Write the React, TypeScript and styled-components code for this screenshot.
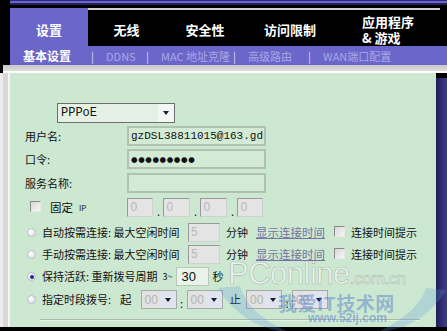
import React from 'react';
import styled, { createGlobalStyle } from 'styled-components';

const colors = {
    purple: '#6b66c9',
    purpleDark: '#2d2a78',
    green: '#cde8d1',
    inputBorder: '#b2c2b2',
    link: '#7474a2',
    navy: '#2b2a6e',
};

const cjk = `"Noto Sans CJK SC", "Noto Sans", sans-serif`;

const GlobalStyle = createGlobalStyle`
    html, body {
        margin: 0;
        padding: 0;
        background: #000;
    }
`;

const Frame = styled.div`
    width: 447px;
    height: 331px;
    overflow: hidden;
    position: relative;
    display: flex;
    flex-direction: column;
    background: #000;
    font-family: ${cjk};
`;

const TopStrip = styled.div`
    height: 8px;
    margin-left: 10px;
    box-sizing: border-box;
    border-top: 1px solid ${colors.purpleDark};
    border-bottom: 3px solid #000;
    background: ${colors.purple};
    box-shadow: inset 0 -2px 0 #23225a;
`;

const TabBar = styled.div`
    height: 38px;
    margin-left: 10px;
    display: flex;
`;

const Tab = styled.div<{ $w: number; $active?: boolean; $left?: number }>`
    width: ${p => p.$w}px;
    box-sizing: border-box;
    display: flex;
    align-items: center;
    justify-content: ${p => (p.$left ? 'flex-start' : 'center')};
    padding-left: ${p => p.$left ?? 0}px;
    color: #fff;
    font-weight: 700;
    font-size: 13px;
    line-height: 16px;
    background: ${p => (p.$active ? colors.purple : '#000')};
    border-top: ${p => (p.$active ? 'none' : '2px solid #cfcfd4')};
    padding-top: ${p => (p.$active ? 5 : 3)}px;
`;

const SubNav = styled.div`
    height: 19px;
    background: ${colors.purple};
    margin-left: 10px;
    display: flex;
    align-items: center;
    padding-left: 13px;
    font-size: 11px;
    color: #a9a6e6;
`;

const SubItem = styled.span<{ $active?: boolean; $w: number }>`
    width: ${p => p.$w}px;
    color: ${p => (p.$active ? '#fff' : '#a9a6e6')};
    font-size: ${p => (p.$active ? 12 : 11)}px;
    font-weight: ${p => (p.$active ? 700 : 400)};
    white-space: nowrap;
`;

const Pipe = styled.span`
    width: 15px;
    color: #dcdaf7;
    font-size: 11px;
`;

const Shade = styled.div`
    height: 8px;
    margin-left: 3px;
    box-sizing: border-box;
    background: linear-gradient(#c6c6c6, #dedede);
    border-bottom: 2px solid #fff;
`;

const Body = styled.div`
    flex: 1;
    display: flex;
    min-height: 0;
`;

const LeftRail = styled.div`
    width: 10px;
    box-sizing: border-box;
    background: #d8d8d8;
    border-left: 3px solid #ececec;
    border-right: 2px solid #f4f4f4;
`;

const RightRail = styled.div`
    width: 11px;
    margin-top: 5px;
    background: linear-gradient(90deg, #1e1d52, ${colors.navy} 40%, #3d3c8c);
`;

const Panel = styled.div`
    flex: 1;
    background: ${colors.green};
    padding: 30px 0 0 15px;
    display: flex;
    flex-direction: column;
    position: relative;
`;

const Row = styled.div<{ $h: number; $indent?: number }>`
    height: ${p => p.$h}px;
    display: flex;
    align-items: flex-start;
    padding-left: ${p => p.$indent ?? 0}px;
    font-size: 11px;
    color: #111;
    white-space: nowrap;
`;

const Label = styled.span`
    width: 102px;
    line-height: 20px;
`;

const Text = styled.span<{ $ml?: number; $size?: number; $w?: number }>`
    margin-left: ${p => p.$ml ?? 0}px;
    font-size: ${p => p.$size ?? 11}px;
    line-height: 19px;
    ${p => (p.$w ? `width: ${p.$w}px;` : '')}
`;

const SelectBox = styled.div<{ $w: number }>`
    width: ${p => p.$w}px;
    height: 20px;
    box-sizing: border-box;
    border: 1px solid #6e6e6e;
    background: #e6f1e5;
    display: flex;
    align-items: center;
    font-family: "Liberation Mono", monospace;
    font-size: 12px;
    padding-left: 3px;
    margin-left: 32px;
`;

const SelectText = styled.span`
    flex: 1;
`;

const ArrowBtn = styled.span<{ $tone?: string }>`
    width: 16px;
    height: 100%;
    background: ${p => p.$tone ?? '#f4f6f4'};
    display: flex;
    align-items: center;
    justify-content: center;
    &::after {
        content: '';
        border-left: 3.5px solid transparent;
        border-right: 3.5px solid transparent;
        border-top: 4px solid #1a1a3a;
    }
`;

const TextInput = styled.div<{ $w: number }>`
    width: ${p => p.$w}px;
    height: 20px;
    box-sizing: border-box;
    border: 2px solid ${colors.inputBorder};
    background: #d3ebd5;
    font-family: "Liberation Mono", monospace;
    font-size: 11px;
    line-height: 16px;
    padding-left: 2px;
    color: #111;
    overflow: hidden;
`;

const Dots = styled.span`
    font-family: "DejaVu Sans", sans-serif;
    font-size: 7.5px;
    letter-spacing: 0.6px;
    font-weight: 700;
`;

const NumInput = styled.div<{ $w: number; $ml?: number }>`
    width: ${p => p.$w}px;
    height: 19px;
    box-sizing: border-box;
    margin-left: ${p => p.$ml ?? 0}px;
    border: 1px solid #9a9a9a;
    border-right-color: #d0d0d0;
    border-bottom-color: #d0d0d0;
    background: #e4e4e4;
    color: #b8b8b8;
    font-family: "Liberation Sans", sans-serif;
    font-size: 12px;
    line-height: 17px;
    padding-left: 2px;
`;

const ActiveNum = styled(NumInput)`
    background: #eaf3ea;
    border: 1px solid #b8c6b8;
    color: #111;
    font-size: 13px;
    padding-left: 5px;
`;

const Dot = styled.span`
    width: 10px;
    text-align: center;
    line-height: 26px;
    font-size: 11px;
`;

const CheckBox = styled.span<{ $ml?: number }>`
    width: 11px;
    height: 11px;
    margin-left: ${p => p.$ml ?? 0}px;
    margin-top: 3px;
    box-sizing: border-box;
    border: 1px solid #8a8a8a;
    border-right-color: #e8e8e8;
    border-bottom-color: #e8e8e8;
    background: linear-gradient(135deg, #d8d8d8, #f6f6f6);
`;

const Radio = styled.span<{ $on?: boolean }>`
    width: 9px;
    height: 9px;
    margin-top: 5px;
    margin-right: 6px;
    border-radius: 50%;
    box-sizing: border-box;
    border: 1px solid #b8c0c8;
    background: radial-gradient(circle at 35% 35%, #fff, #d6dbe0);
    display: flex;
    align-items: center;
    justify-content: center;
    &::after {
        content: '';
        display: ${p => (p.$on ? 'block' : 'none')};
        width: 4px;
        height: 4px;
        border-radius: 50%;
        background: #262a7a;
    }
`;

const LinkText = styled.span<{ $ml?: number }>`
    margin-left: ${p => p.$ml ?? 0}px;
    color: ${colors.link};
    text-decoration: underline;
    line-height: 19px;
    font-size: 11.5px;
`;

const SmallSelect = styled.div<{ $ml?: number }>`
    width: 36px;
    height: 19px;
    margin-left: ${p => p.$ml ?? 0}px;
    box-sizing: border-box;
    border: 1px solid #a8a8a8;
    background: #e2e2e2;
    display: flex;
    align-items: center;
    color: #b4b4b4;
    font-family: "Liberation Sans", sans-serif;
    font-size: 12px;
    padding-left: 3px;
`;

const Divider = styled.div`
    margin: 6px 16px 0 15px;
    height: 1px;
    background: #aeb9ae;
    border-bottom: 1px solid #e6f2e6;
`;

const Bottom = styled.div`
    height: 4px;
    background: #000;
`;

const Watermark = styled.div`
    position: absolute;
    left: 218px;
    top: 185px;
    width: 200px;
    height: 72px;
    pointer-events: none;
    display: flex;
    flex-direction: column;
    align-items: flex-start;
`;

const WmBrand = styled.div`
    font-family: "Liberation Sans", sans-serif;
    color: rgba(255, 255, 255, 0.55);
    -webkit-text-stroke: 0.6px rgba(120, 130, 130, 0.5);
    font-size: 31px;
    line-height: 32px;
    letter-spacing: -0.5px;
    span {
        font-size: 17px;
    }
`;

const WmSite = styled.div`
    margin: -4px 0 0 50px;
    font-family: ${cjk};
    font-weight: 700;
    font-size: 19px;
    line-height: 24px;
    color: rgba(60, 110, 200, 0.42);
    letter-spacing: 0.5px;
`;

const WmUrl = styled.div`
    margin: -3px 0 0 80px;
    font-family: "Liberation Sans", sans-serif;
    font-weight: 700;
    font-size: 12px;
    line-height: 12px;
    color: rgba(60, 110, 200, 0.45);
`;

const Wings = styled.svg`
    position: absolute;
    left: -10px;
    top: 10px;
`;

const tabs = [
    { label: '设置', w: 78, active: true },
    { label: '无线', w: 77 },
    { label: '安全性', w: 80 },
    { label: '访问限制', w: 90 },
    { label: '应用程序\n& 游戏', w: 105, left: 27 },
];

const subs = [
    { label: '基本设置', w: 68, active: true },
    { label: 'DDNS', w: 40 },
    { label: 'MAC 地址克隆', w: 72 },
    { label: '高级路由', w: 60 },
    { label: 'WAN端口配置', w: 80 },
];

function IdleRow({ label }: { label: string }) {
    return (
        <Row $h={22} $indent={2}>
            <Radio />
            <Text $w={146}>{label}</Text>
            <NumInput $w={32}>5</NumInput>
            <Text $ml={6}>分钟</Text>
            <LinkText $ml={8}>显示连接时间</LinkText>
            <CheckBox $ml={9} />
            <Text $ml={6}>连接时间提示</Text>
        </Row>
    );
}

export default function App() {
    return (
        <Frame>
            <GlobalStyle />
            <TopStrip />
            <TabBar>
                {tabs.map(t => (
                    <Tab key={t.label} $w={t.w} $active={t.active} $left={t.left}>
                        <div>
                            {t.label.split('\n').map((l, i) => (
                                <React.Fragment key={i}>{i > 0 && <br />}{l}</React.Fragment>
                            ))}
                        </div>
                    </Tab>
                ))}
            </TabBar>
            <SubNav>
                {subs.map((s, i) => (
                    <React.Fragment key={s.label}>
                        {i > 0 && <Pipe>|</Pipe>}
                        <SubItem $w={s.w} $active={s.active}>{s.label}</SubItem>
                    </React.Fragment>
                ))}
            </SubNav>
            <Shade />
            <Body>
                <LeftRail />
                <Panel>
                    <Row $h={23}>
                        <SelectBox $w={118}>
                            <SelectText>PPPoE</SelectText>
                            <ArrowBtn />
                        </SelectBox>
                    </Row>
                    <Row $h={23}>
                        <Label>用户名:</Label>
                        <TextInput $w={139}>gzDSL38811015@163.gd</TextInput>
                    </Row>
                    <Row $h={24}>
                        <Label>口令:</Label>
                        <TextInput $w={139}><Dots>●●●●●●●●●</Dots></TextInput>
                    </Row>
                    <Row $h={25}>
                        <Label>服务名称:</Label>
                        <TextInput $w={139} />
                    </Row>
                    <Row $h={25} $indent={5}>
                        <CheckBox />
                        <Text $ml={9} $size={11.5}>固定</Text>
                        <Text $ml={6} $size={8}>IP</Text>
                        <NumInput $w={26} $ml={41}>0</NumInput>
                        <Dot>.</Dot>
                        <NumInput $w={27}>0</NumInput>
                        <Dot>.</Dot>
                        <NumInput $w={27}>0</NumInput>
                        <Dot>.</Dot>
                        <NumInput $w={26}>0</NumInput>
                    </Row>
                    <IdleRow label="自动按需连接: 最大空闲时间" />
                    <IdleRow label="手动按需连接: 最大空闲时间" />
                    <Row $h={23} $indent={2}>
                        <Radio $on />
                        <Text>保持活跃: 重新拨号周期</Text>
                        <Text $ml={5} $size={9}>3~</Text>
                        <ActiveNum $w={33} $ml={3}>30</ActiveNum>
                        <Text $ml={4}>秒</Text>
                    </Row>
                    <Row $h={23} $indent={2}>
                        <Radio />
                        <Text>指定时段拨号:</Text>
                        <Text $ml={9} $size={11.5}>起</Text>
                        <SmallSelect $ml={9}>00<SelectText /><ArrowBtn $tone="#dfe5ef" /></SmallSelect>
                        <Dot>:</Dot>
                        <SmallSelect>00<SelectText /><ArrowBtn $tone="#dfe5ef" /></SmallSelect>
                        <Text $ml={7} $size={11.5}>止</Text>
                        <SmallSelect $ml={5}>00<SelectText /><ArrowBtn $tone="#dfe5ef" /></SmallSelect>
                        <Dot>:</Dot>
                        <SmallSelect>00<SelectText /><ArrowBtn $tone="#dfe5ef" /></SmallSelect>
                    </Row>
                    <Divider />
                    <Watermark>
                        <Wings width="230" height="70" viewBox="0 0 230 70">
                            <path d="M0 20 C 15 45, 40 62, 70 64 C 45 52, 28 38, 22 18 Z" fill="rgba(90,150,220,0.25)" />
                            <path d="M228 22 C 215 45, 190 62, 160 64 C 185 52, 202 38, 208 20 Z" fill="rgba(90,150,220,0.25)" />
                        </Wings>
                        <WmBrand>PConline<span>.com.cn</span></WmBrand>
                        <WmSite>我爱IT技术网</WmSite>
                        <WmUrl>www.52ij.com</WmUrl>
                    </Watermark>
                </Panel>
                <RightRail />
            </Body>
            <Bottom />
        </Frame>
    );
}
